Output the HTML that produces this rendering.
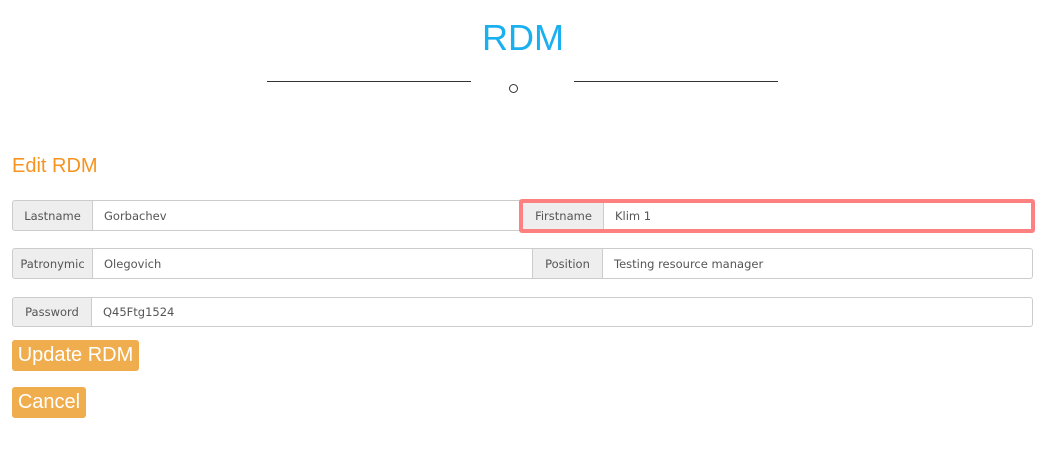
<!DOCTYPE html>
<html><head><style>
body{margin:0;width:1048px;height:461px;background:#fff;font-family:"DejaVu Sans","Liberation Sans",sans-serif;position:relative;overflow:hidden}
.a{position:absolute;box-sizing:border-box}
.lab{background:#eee;border:1px solid #ccc;color:#555;font-size:11.5px;display:flex;align-items:center;justify-content:center}
.inp{background:#fff;border:1px solid #ccc;color:#555;font-size:11.5px;display:flex;align-items:center;padding-left:11px}
.btn{background:#f0ad4e;color:#fff;font-family:"Liberation Sans",sans-serif;font-size:20px;border-radius:3px;display:flex;align-items:center;justify-content:center}
</style></head><body>
<div class="a" style="left:0;width:1046px;top:15px;text-align:center;font-family:'Liberation Sans',sans-serif;font-size:36px;color:#1ab0f0;line-height:46px">RDM</div>
<div class="a" style="left:267px;top:81px;width:204px;height:1px;background:#333"></div>
<div class="a" style="left:574px;top:81px;width:204px;height:1px;background:#333"></div>
<div class="a" style="left:509px;top:84px;width:9px;height:9px;border:1px solid #333;border-radius:50%"></div>
<div class="a" style="left:12px;top:152px;font-family:'Liberation Sans',sans-serif;font-size:20px;color:#f7931e;line-height:28px">Edit RDM</div>

<div class="a lab" style="left:12px;top:200px;width:81px;height:31px;border-radius:3px 0 0 3px">Lastname</div>
<div class="a inp" style="left:92px;top:200px;width:428px;height:31px">Gorbachev</div>
<div class="a" style="left:519px;top:199px;width:516px;height:34px;border:4px solid #ff8080;border-radius:3px"></div>
<div class="a lab" style="left:523px;top:203px;width:81px;height:26px;border:none">Firstname</div>
<div class="a inp" style="left:603px;top:203px;width:428px;height:26px;border:none;border-left:1px solid #ccc">Klim 1</div>

<div class="a lab" style="left:12px;top:248px;width:81px;height:31px;border-radius:3px 0 0 3px">Patronymic</div>
<div class="a inp" style="left:92px;top:248px;width:441px;height:31px">Olegovich</div>
<div class="a lab" style="left:532px;top:248px;width:71px;height:31px">Position</div>
<div class="a inp" style="left:602px;top:248px;width:431px;height:31px;border-radius:0 3px 3px 0">Testing resource manager</div>

<div class="a lab" style="left:12px;top:297px;width:80px;height:30px;border-radius:3px 0 0 3px">Password</div>
<div class="a inp" style="left:91px;top:297px;width:942px;height:30px;border-radius:0 3px 3px 0">Q45Ftg1524</div>

<div class="a btn" style="left:12px;top:340px;width:127px;height:31px">Update RDM</div>
<div class="a btn" style="left:12px;top:387px;width:74px;height:31px">Cancel</div>
</body></html>
